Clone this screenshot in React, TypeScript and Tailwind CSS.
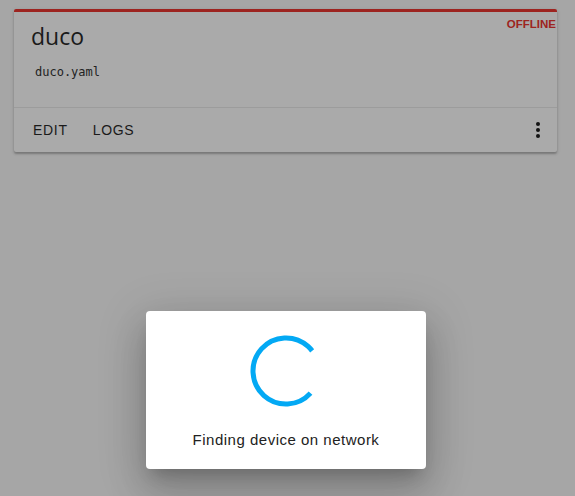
import React from "react";

export default function App() {
  return (
    <div className="relative h-[496px] w-full overflow-hidden bg-[#a6a6a6]" style={{ fontFamily: "'Liberation Sans', Arial, sans-serif" }}>
      <div className="pl-[14px] pr-[18px] pt-[9px]">
        <div className="rounded-[2px] bg-[#aaaaaa] shadow-[0_2px_2px_rgba(0,0,0,0.22),0_1px_4px_rgba(0,0,0,0.12)]">
          <div className="h-[3px] rounded-t-[2px] bg-[#9d2420]" />
          <div className="relative h-[95px] px-[17px] pt-[8px]">
            <div className="absolute right-[1px] top-[4px] text-[11.5px] font-bold leading-[16px] text-[#9d2420]">OFFLINE</div>
            <div className="h-[32px] text-[23px] leading-[32px] text-[#1a1a1a]" style={{ fontFamily: "'Open Sans', 'Noto Sans', sans-serif" }}>
              duco
            </div>
            <div className="mt-[12px] pl-[4px] text-[12px] leading-[16px] text-[#222222]" style={{ fontFamily: "'DejaVu Sans Mono', monospace" }}>
              duco.yaml
            </div>
          </div>
          <div className="h-px bg-[#9c9c9c]" />
          <div className="flex h-[44px] items-center pl-[19px] pr-[14px]">
            <span className="text-[14px] tracking-[0.7px] text-[#1a1a1a]">EDIT</span>
            <span className="ml-[25px] text-[14px] tracking-[0.7px] text-[#1a1a1a]">LOGS</span>
            <div className="ml-auto flex flex-col items-center gap-[2px] pr-[3px]">
              <span className="h-[4px] w-[4px] rounded-full bg-[#141414]" />
              <span className="h-[4px] w-[4px] rounded-full bg-[#141414]" />
              <span className="h-[4px] w-[4px] rounded-full bg-[#141414]" />
            </div>
          </div>
        </div>
      </div>

      <div className="absolute left-[146px] top-[311px] flex h-[158px] w-[280px] flex-col items-center rounded-[4px] bg-white shadow-[0_11px_15px_-7px_rgba(0,0,0,0.2),0_24px_38px_3px_rgba(0,0,0,0.14),0_9px_46px_8px_rgba(0,0,0,0.12)]">
        <svg className="mt-[24px]" width="72" height="72" viewBox="0 0 72 72">
          <circle
            cx="36"
            cy="36"
            r="33"
            fill="none"
            stroke="#03a9f4"
            strokeWidth="5"
            strokeDasharray={`${(2 * Math.PI * 33 * 280) / 360} ${2 * Math.PI * 33}`}
            transform="rotate(42 36 36)"
          />
        </svg>
        <div className="mt-[23px] text-[15px] leading-[20px] tracking-[0.5px] text-[#222222]">Finding device on network</div>
      </div>
    </div>
  );
}
